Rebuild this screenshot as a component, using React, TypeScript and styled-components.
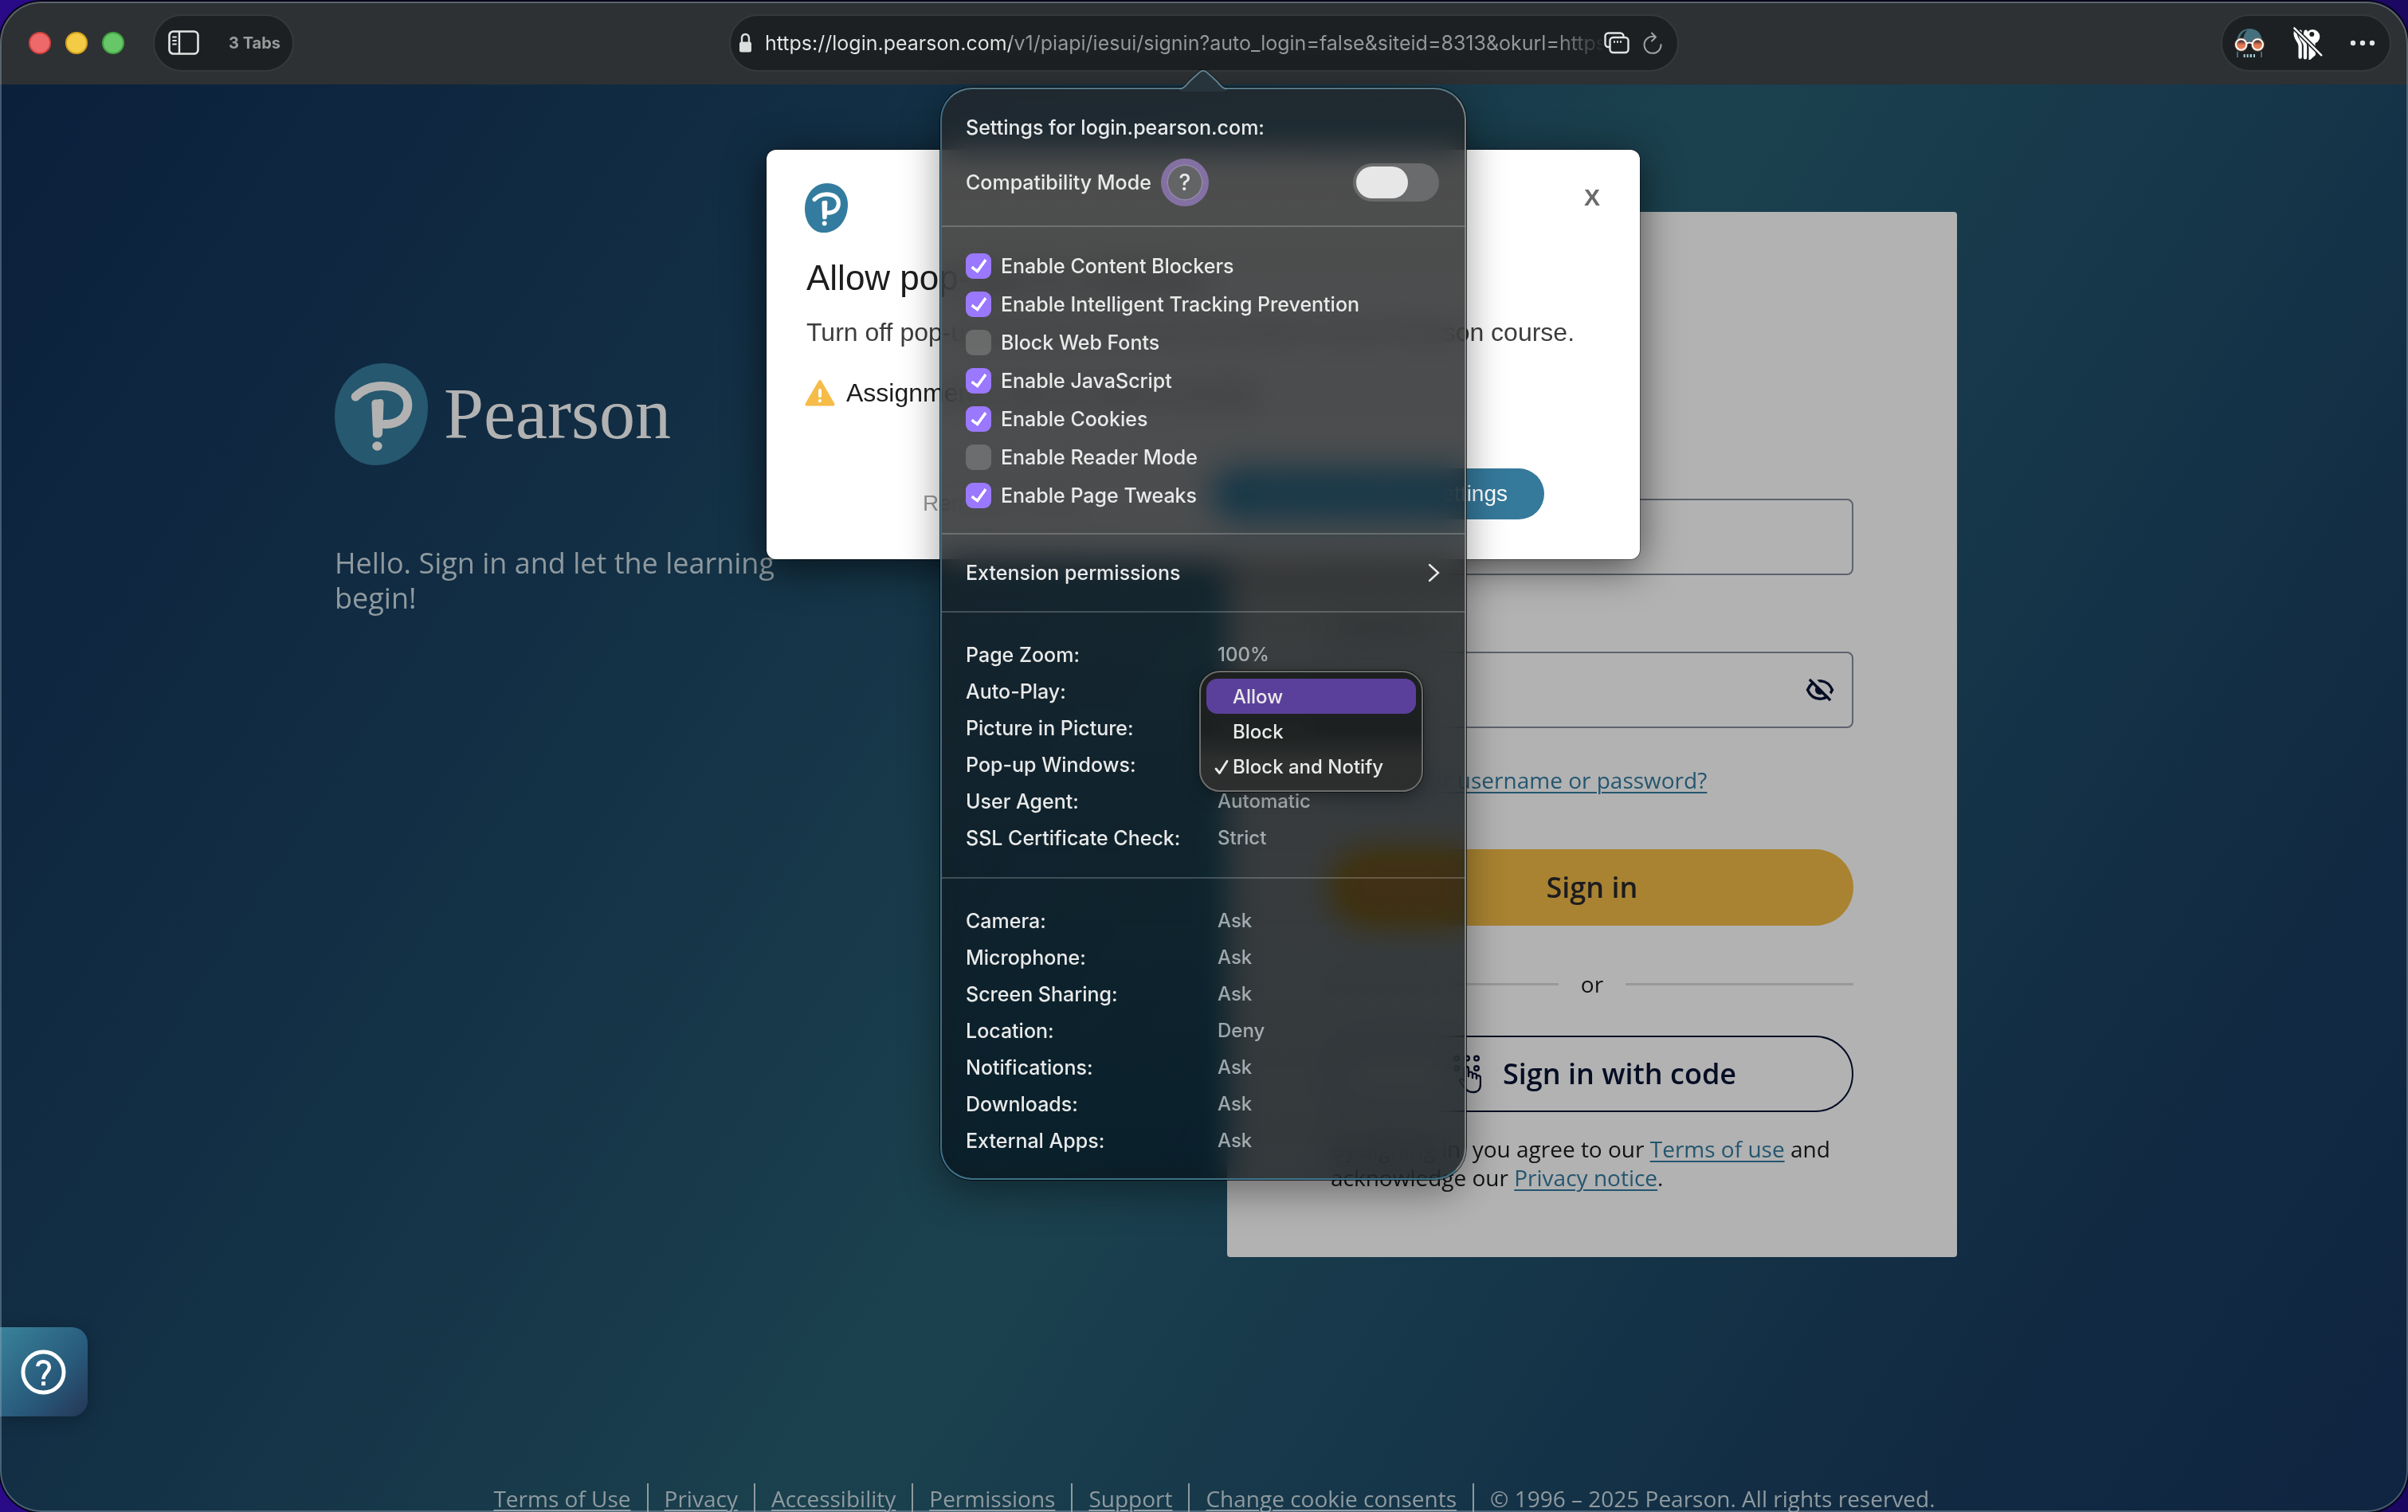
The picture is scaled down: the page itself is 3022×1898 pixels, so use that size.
import React from "react";
import styled, { createGlobalStyle, css } from "styled-components";

const system = `Inter, "Liberation Sans", sans-serif`;
const page = `"Open Sans", "Noto Sans", sans-serif`;
const helvetica = `"Liberation Sans", Arial, sans-serif`;

const GlobalStyle = createGlobalStyle`
  *, *::before, *::after { box-sizing: border-box; }
  body { margin: 0; }
  h1, h2, p, ul { margin: 0; padding: 0; }
  button, input, select { font: inherit; color: inherit; margin: 0; }
  button { padding: 0; border: 0; background: none; cursor: pointer; }
  svg { display: block; flex: none; }
`;

const Desktop = styled.div`
  height: 100vh;
  padding-top: 2px;
  overflow: hidden;
  background: linear-gradient(90deg, #2a0a86 0%, #2233b8 35%, #4c8f7c 50%, #2233b8 62%, #1a0760 100%);
`;

const BrowserWindow = styled.div`
  position: relative;
  display: flex;
  flex-direction: column;
  height: 100%;
  border-radius: 52px;
  overflow: hidden;
  background: #2e3133;
  box-shadow: 0 0 0 2px #08051c;

  &::after {
    content: "";
    position: absolute;
    inset: 0;
    z-index: 20;
    border: 2px solid rgba(150, 170, 185, 0.42);
    border-radius: 52px;
    pointer-events: none;
  }
`;

/* ---------- toolbar ---------- */

const Toolbar = styled.header`
  position: relative;
  z-index: 10;
  flex: none;
  display: grid;
  grid-template-columns: 1fr 1192px 1fr;
  align-items: center;
  height: 104px;
  background: #2e3133;
  font-family: ${system};
`;

const ToolbarSide = styled.div<{ $end?: boolean }>`
  display: flex;
  align-items: center;
  gap: 36px;
  padding: 0 21px 0 36px;
  justify-content: ${(p) => (p.$end ? "flex-end" : "flex-start")};
`;

const Lights = styled.div`
  display: flex;
  gap: 18px;
`;

const Light = styled.button<{ $fill: string; $edge: string }>`
  width: 28px;
  height: 28px;
  border-radius: 50%;
  background: ${(p) => p.$fill};
  border: 2px solid ${(p) => p.$edge};
`;

const pill = css`
  display: flex;
  align-items: center;
  height: 72px;
  border: 2px solid #36393c;
  border-radius: 36px;
  background: #1c2022;
`;

const TabsPill = styled.div`
  ${pill}
  gap: 36px;
  padding: 0 15px 0 17px;
  color: #9a9b9c;
  font-size: 20px;
  font-weight: 700;
`;

const ExtensionsPill = styled.div`
  ${pill}
  gap: 34px;
  padding: 0 18px 0 14px;
`;

const AddressArea = styled.div`
  position: relative;
`;

const AddressBar = styled.div`
  ${pill}
  padding: 0 18px 0 10px;
  gap: 16px;
`;

const AddressInput = styled.input`
  flex: 1;
  min-width: 0;
  height: 40px;
  margin-right: -14px;
  padding: 0;
  border: 0;
  outline: 0;
  font-size: 25px;
  color: transparent;
  background: linear-gradient(90deg, #e6e7e7 308px, #97999a 308px, #97999a calc(100% - 60px), #25292b 100%);
  background-clip: text;
  -webkit-background-clip: text;
`;

/* ---------- page ---------- */

const Page = styled.div`
  position: relative;
  flex: 1;
  min-height: 0;
  overflow: hidden;
  background: linear-gradient(
    123deg,
    #0b203b 0%,
    #122e44 26%,
    #1b414e 52%,
    #16374a 67%,
    #122c43 82%,
    #0f2440 100%
  );
  font-family: ${page};
  font-size: 28px;
  line-height: 36px;
  color: #111214;
`;

const Columns = styled.main`
  display: flex;
  justify-content: space-between;
  padding: 160px 566px 0 420px;
`;

const Brand = styled.section`
  width: 580px;
  padding-top: 190px;
`;

const Logo = styled.div`
  display: flex;
  align-items: center;
  gap: 20px;
  height: 128px;
  font-family: "Liberation Serif", "Times New Roman", serif;
  font-size: 90px;
  line-height: 128px;
  color: #b2b2b2;
`;

const Tagline = styled.p`
  margin-top: 101px;
  font-size: 36px;
  line-height: 44px;
  color: #8f9a9f;
`;

const Card = styled.form`
  flex: none;
  display: flex;
  flex-direction: column;
  width: 916px;
  padding: 120px 130px 82px;
  border-radius: 4px;
  background: #b2b2b2;
`;

const CardTitle = styled.h1`
  margin-bottom: 118px;
  font-size: 48px;
  line-height: 72px;
  font-weight: 600;
`;

const Field = styled.div`
  display: flex;
  flex-direction: column;
  gap: 14px;
  margin-bottom: 46px;
`;

const FieldBox = styled.div`
  display: flex;
  align-items: center;
  height: 96px;
  padding: 0 22px;
  border: 2px solid #5d626d;
  border-radius: 8px;
`;

const FieldInput = styled.input`
  flex: 1;
  min-width: 0;
  height: 100%;
  border: 0;
  outline: 0;
  background: transparent;
`;

const PageLink = styled.a`
  color: #24566f;
  text-decoration: underline;
  text-decoration-thickness: 2px;
  text-underline-offset: 4px;
`;

const ForgotRow = styled.p`
  padding-top: 1px;
  margin-bottom: 69px;
`;

const WideButton = styled.button<{ $outline?: boolean }>`
  display: flex;
  align-items: center;
  justify-content: center;
  gap: 27px;
  height: 96px;
  border-radius: 48px;
  font-size: 36px;
  font-weight: 600;
  ${(p) =>
    p.$outline
      ? css`
          border: 2px solid #050d24;
          color: #050d24;
        `
      : css`
          background: #a98331;
          color: #1c1c1f;
        `}
`;

const Divider = styled.div`
  display: flex;
  align-items: center;
  gap: 28px;
  margin: 55px 0 47px;

  &::before, &::after {
    content: "";
    flex: 1;
    height: 3px;
    background: #999;
  }
`;

const Legal = styled.p`
  margin-top: 28px;
`;

const Footer = styled.footer`
  display: flex;
  justify-content: center;
  margin-top: 284px;
  line-height: 38px;
  color: #8f9a9f;
`;

const FooterItem = styled.span`
  padding: 0 20px;
  & + & { border-left: 2px solid #8f9a9f; }
  &:first-child { padding-left: 26px; }
  &:last-child { padding-right: 0; }
`;

const FooterLink = styled.a`
  color: inherit;
  text-decoration: underline;
  text-decoration-thickness: 2px;
  text-underline-offset: 3px;
`;

const HelpTab = styled.button`
  position: absolute;
  left: 0;
  bottom: 120px;
  display: flex;
  align-items: center;
  width: 110px;
  height: 112px;
  padding-left: 26px;
  border-radius: 0 20px 20px 0;
  background: linear-gradient(135deg, #398299 0%, #285a7b 60%, #263656 100%);
  box-shadow: 0 4px 20px rgba(0, 0, 0, 0.25);
`;

/* ---------- pop-up notice ---------- */

const Notice = styled.section`
  position: absolute;
  top: 82px;
  left: 50%;
  width: 1096px;
  margin-left: -549px;
  padding: 42px 50px 50px 48px;
  border-radius: 12px;
  background: #fff;
  box-shadow: 0 0 0 1px rgba(0, 0, 0, 0.35), 0 10px 50px rgba(0, 0, 0, 0.6);
  font-family: ${helvetica};
  font-size: 32px;
  line-height: 40px;
  color: #1d1d1f;
`;

const NoticeTop = styled.div`
  display: flex;
  justify-content: space-between;
  align-items: flex-start;
`;

const CloseButton = styled.button`
  font-size: 30px;
  font-weight: 700;
  line-height: 36px;
  color: #6b6b6b;
`;

const NoticeTitle = styled.h2`
  margin-top: 31px;
  padding-left: 2px;
  font-size: 44px;
  line-height: 52px;
  font-weight: 400;
`;

const NoticeText = styled.p`
  margin-top: 22px;
  padding-left: 2px;
  color: #3d3d3f;
  white-space: nowrap;
`;

const Warning = styled.p`
  display: flex;
  align-items: center;
  gap: 14px;
  margin-top: 36px;
`;

const NoticeActions = styled.div`
  display: flex;
  justify-content: space-between;
  align-items: flex-end;
  margin-top: 75px;
  padding: 0 70px 0 148px;
  font-size: 28px;
  line-height: 32px;
`;

const LaterButton = styled.button`
  padding-bottom: 4px;
  color: #999;
`;

const SettingsButton = styled.button`
  height: 64px;
  padding: 0 46px;
  border-radius: 32px;
  background: #35799b;
  color: #fff;
`;

/* ---------- site settings popover ---------- */

const Popover = styled.section`
  position: absolute;
  top: 92px;
  left: 50%;
  width: 660px;
  margin-left: -331px;
  border: 2px solid;
  border-color: #557784 #7f8486 #3f7389 #3f6e88;
  border-radius: 40px;
  background: linear-gradient(rgba(38, 38, 38, 0.82), rgba(12, 19, 23, 0.76));
  backdrop-filter: blur(20px) saturate(2.4);
  box-shadow: 0 0 0 1px rgba(0, 0, 0, 0.75), 0 14px 50px rgba(0, 0, 0, 0.4);
  font-size: 25px;
  font-weight: 500;
  line-height: 36px;
  color: #e9eaea;
`;

const Arrow = styled.svg`
  position: absolute;
  z-index: 1;
  top: 69px;
  left: 50%;
  margin-left: -31px;
`;

const Section = styled.div<{ $top: number; $bottom: number }>`
  padding: ${(p) => `${p.$top}px 30px ${p.$bottom}px`};
  & + & { border-top: 2px solid rgba(255, 255, 255, 0.2); }
`;

const PopoverTitle = styled.h2`
  font-size: inherit;
  font-weight: inherit;
`;

const CompatRow = styled.div`
  display: flex;
  align-items: center;
  gap: 12px;
  height: 60px;
  margin-top: 21px;
`;

const HintButton = styled.button`
  width: 60px;
  height: 60px;
  border: 7px solid #8471a3;
  border-radius: 50%;
  background: #636465;
  box-shadow: inset 0 0 0 2px #9284ad;
  font-size: 28px;
`;

const Switch = styled.input`
  appearance: none;
  width: 108px;
  height: 48px;
  margin: 0 2px 0 auto;
  padding: 4px;
  border-radius: 24px;
  background: #6a6b6c;

  &::before {
    content: "";
    display: block;
    width: 65px;
    height: 40px;
    border-radius: 20px;
    background: #e6e7e6;
  }
`;

const CheckRow = styled.label`
  display: flex;
  align-items: center;
  gap: 12px;
  height: 48px;
`;

const CheckBox = styled.input`
  appearance: none;
  flex: none;
  display: grid;
  place-items: center;
  width: 32px;
  height: 32px;
  border-radius: 9px;
  background: rgba(255, 255, 255, 0.18);

  &:checked { background: #9a78ff; }

  &:checked::before {
    content: "";
    width: 11px;
    height: 20px;
    margin-bottom: 4px;
    border: solid #fff;
    border-width: 0 4px 4px 0;
    border-radius: 1px;
    transform: rotate(36deg);
  }
`;

const PermissionsButton = styled.button`
  display: flex;
  align-items: center;
  justify-content: space-between;
  width: 100%;
  height: 96px;
`;

const SettingRow = styled.div`
  display: grid;
  grid-template-columns: 316px 1fr;
  align-items: center;
  height: 46px;
`;

const SettingValue = styled.div`
  position: relative;
  height: 46px;
`;

const ValueSelect = styled.select`
  appearance: none;
  height: 46px;
  padding: 0;
  border: 0;
  background: transparent;
  font-size: 24px;
  color: rgba(225, 232, 236, 0.66);
`;

const Menu = styled.div`
  position: absolute;
  z-index: 2;
  left: -23px;
  top: -95px;
  width: 281px;
  padding: 8px 7px;
  border: 2px solid #6c6e6e;
  border-radius: 26px;
  background: linear-gradient(rgba(30, 33, 33, 0.97) 50%, rgba(46, 47, 47, 0.96) 75%);
  backdrop-filter: blur(8px);
  box-shadow: 0 0 0 1px #101111, 0 6px 20px rgba(0, 0, 0, 0.35);
`;

const MenuItem = styled.button<{ $active?: boolean }>`
  display: grid;
  grid-template-columns: 23px 1fr;
  align-items: center;
  width: 100%;
  height: 44px;
  padding: 2px 0 0 10px;
  border-radius: 14px;
  text-align: left;
  white-space: nowrap;
  font-size: 24px;
  background: ${(p) => (p.$active ? "#5b409b" : "transparent")};
`;

/* ---------- drawings ---------- */

const PearsonMark = ({ width, height, blob, ink }: { width: number; height: number; blob: string; ink: string }) => (
  <svg width={width} height={height} viewBox="0 0 116 128" preserveAspectRatio="none" aria-hidden="true">
    <path fill={blob} d="M60 0C94 0 116 24 116 55C116 96 88 128 51 128C18 128 0 98 0 66C0 27 27 0 60 0Z" />
    <path fill="none" stroke={ink} strokeWidth="11" strokeLinecap="round" d="M26 42C35 33 45 28.500 59 28.500C79 28.500 91.500 38 91 53C90.500 68 79 77 62 76.500" />
    <path fill={ink} d="M46 51C46 47 48 45.500 52 45.500L57 45C60 45 61 47 61 50L59.500 88C59.500 91.500 57 93.500 53 93.500C49.500 93.500 47.500 92 47.500 88Z" />
    <ellipse fill={ink} cx="53" cy="104" rx="6.200" ry="5.800" />
  </svg>
);

const SidebarIcon = () => (
  <svg width="40" height="32" viewBox="0 0 40 32" fill="none" stroke="#e3e4e4" aria-hidden="true">
    <rect x="1.500" y="1.500" width="36" height="28" rx="5" strokeWidth="2.600" />
    <path strokeWidth="2.400" d="M14 2V30" />
    <path strokeWidth="1.800" strokeLinecap="round" d="M6 8.500H10M6 13H10M6 17.500H10" />
  </svg>
);

const LockIcon = () => (
  <svg width="17" height="26" viewBox="0 0 17 26" aria-hidden="true">
    <path fill="none" stroke="#dcdddd" strokeWidth="2.400" d="M4 13V7.500C4 4 5.500 2 8.500 2S13 4 13 7.500V13" />
    <rect x="1" y="11.500" width="15" height="13" rx="2.500" fill="#dcdddd" />
  </svg>
);

const WindowsIcon = () => (
  <svg width="32" height="28" viewBox="0 0 32 28" fill="none" stroke="#e3e4e4" strokeWidth="2.400" aria-hidden="true">
    <path d="M7 19H5.500A4 4 0 0 1 1.500 15V5.500A4 4 0 0 1 5.500 1.500H20.500A4 4 0 0 1 24.500 5.500V6.500" />
    <rect x="7.500" y="7" width="23" height="19" rx="4" fill="#1c2022" />
    <path strokeDasharray="2 2" d="M12 12.500H22" />
  </svg>
);

const ReloadIcon = () => (
  <svg width="26" height="28" viewBox="0 0 26 28" fill="none" stroke="#a1a2a3" strokeWidth="2" strokeLinecap="round" strokeLinejoin="round" aria-hidden="true">
    <path d="M16 6.300A10.500 10.500 0 1 0 23.500 16" />
    <path d="M12 1.500L17 6.500L12 11.500" />
  </svg>
);

const SpyIcon = () => (
  <svg width="40" height="40" viewBox="312 102 120 120" aria-hidden="true">
    <defs>
      <linearGradient id="lens" x1="0" y1="0" x2="0" y2="1">
        <stop offset="0.150" stopColor="#4a3434" />
        <stop offset="0.500" stopColor="#e07650" />
        <stop offset="1" stopColor="#ea8560" />
      </linearGradient>
    </defs>
    <path fill="#44707f" d="M325 156C326 122 350 108 372 108C396 108 418 122 420 156Z" />
    <path fill="#1c2022" d="M333 156C335 132 348 118 364 113C352 126 349 138 349 156Z" />
    <path fill="#1c2022" d="M340 186L352 158H392L404 186Z" />
    <circle cx="341" cy="168" r="26" fill="#d9704c" opacity="0.400" />
    <circle cx="403" cy="168" r="26" fill="#d9704c" opacity="0.400" />
    <circle cx="341" cy="168" r="20" fill="url(#lens)" stroke="#fff" strokeWidth="6" />
    <circle cx="403" cy="168" r="20" fill="url(#lens)" stroke="#fff" strokeWidth="6" />
    <path fill="none" stroke="#fff" strokeWidth="6" d="M360 164Q372 157 384 164" />
    <path fill="#3f6b7c" d="M324 194H330V216H324ZM414 194H420V216H414Z" />
    <path fill="#a9cdd8" d="M350 204H356V216H350ZM362 204H368V216H362ZM374 204H381V216H374ZM387 204H393V216H387Z" />
  </svg>
);

const BirdIcon = () => (
  <svg width="38" height="42" viewBox="527 98 114 126" fill="none" aria-hidden="true">
    <g stroke="#fff" strokeWidth="13" strokeLinecap="round">
      <path d="M539 116C532 146 556 150 556 172V214" />
      <path d="M556 118C550 146 575 150 575 172V216" />
      <path d="M577 118C568 146 595 156 595 178V214L606 204" />
    </g>
    <circle cx="603" cy="137" r="27" fill="#fff" />
    <path fill="#fff" d="M590 160L612 152L614 206L596 220Z" />
    <circle cx="600" cy="128" r="9" fill="#1c2022" />
    <path stroke="#1c2022" strokeWidth="17" d="M528 99L641 212" />
    <path stroke="#fff" strokeWidth="7" strokeLinecap="round" d="M534 105L636 207" />
  </svg>
);

const MoreIcon = () => (
  <svg width="32" height="8" viewBox="0 0 32 8" fill="#e3e4e4" aria-hidden="true">
    <circle cx="4" cy="4" r="3.200" />
    <circle cx="16" cy="4" r="3.200" />
    <circle cx="28" cy="4" r="3.200" />
  </svg>
);

const EyeOffIcon = () => (
  <svg width="36" height="30" viewBox="0 0 38 32" fill="none" aria-hidden="true">
    <path stroke="#050d24" strokeWidth="3.600" d="M2.500 16C6 8 12 4 19 4S32 8 35.500 16C32 24 26 28 19 28S6 24 2.500 16Z" />
    <circle cx="19" cy="16" r="6.500" fill="#050d24" />
    <path stroke="#b2b2b2" strokeWidth="5" d="M9 0L36 27" />
    <path stroke="#050d24" strokeWidth="3.600" d="M5 2L33 30" />
  </svg>
);

const CodeIcon = () => (
  <svg width="42" height="50" viewBox="0 0 42 50" fill="none" stroke="#050d24" strokeWidth="2.400" aria-hidden="true">
    <circle cx="11" cy="5.500" r="2.800" />
    <circle cx="24" cy="5.500" r="2.800" />
    <circle cx="36" cy="5.500" r="2.800" />
    <circle cx="11" cy="18" r="2.800" />
    <circle cx="36" cy="18" r="2.800" />
    <path strokeLinejoin="round" d="M21 34V19C21 15 26 15 26 19V28V24C26 22 31 22 31 25V30V26C31 24 36 24 36 27V31V28C37 26 41 27 41 30V38C41 45 37 48 32 48C26 48 24 46 21 42L15 34C14 31 18 30 21 34" />
  </svg>
);

const WarningIcon = () => (
  <svg width="38" height="34" viewBox="0 0 38 34" aria-hidden="true">
    <path fill="#f5bc48" stroke="#f5bc48" strokeWidth="4" strokeLinejoin="round" d="M19 3L35.500 31.500H2.500Z" />
    <path stroke="#fff" strokeWidth="4" strokeLinecap="round" d="M19 14V21M19 27V27.200" />
  </svg>
);

const QuestionIcon = () => (
  <svg width="57" height="57" viewBox="0 0 58 58" fill="none" stroke="#fff" aria-hidden="true">
    <circle cx="29" cy="29" r="26" strokeWidth="5" />
    <path strokeWidth="4.500" d="M21.500 21.500C22 17 25 15.500 29 15.500C33.500 15.500 36.500 18.500 36.500 22.500C36.500 29 29 30 29 38" />
    <path strokeWidth="5" d="M29 41V46" />
  </svg>
);

const ChevronIcon = () => (
  <svg width="16" height="24" viewBox="0 0 16 24" fill="none" stroke="#e9eaea" strokeWidth="2.400" strokeLinecap="round" aria-hidden="true">
    <path d="M2 2L13 12L2 22" />
  </svg>
);

const TickIcon = () => (
  <svg width="18" height="20" viewBox="0 0 18 20" fill="none" stroke="#e9eaea" strokeWidth="2.800" strokeLinecap="round" strokeLinejoin="round" aria-hidden="true">
    <path d="M2 12L6.500 17.500L16 2.500" />
  </svg>
);

/* ---------- data ---------- */

const toggles: [string, boolean][] = [
  ["Enable Content Blockers", true],
  ["Enable Intelligent Tracking Prevention", true],
  ["Block Web Fonts", false],
  ["Enable JavaScript", true],
  ["Enable Cookies", true],
  ["Enable Reader Mode", false],
  ["Enable Page Tweaks", true],
];

const pageSettings: [string, string][] = [
  ["Page Zoom", "100%"],
  ["Auto-Play", "Automatic"],
  ["Picture in Picture", "Automatic"],
  ["Pop-up Windows", "Block and Notify"],
  ["User Agent", "Automatic"],
  ["SSL Certificate Check", "Strict"],
];

const permissions: [string, string][] = [
  ["Camera", "Ask"],
  ["Microphone", "Ask"],
  ["Screen Sharing", "Ask"],
  ["Location", "Deny"],
  ["Notifications", "Ask"],
  ["Downloads", "Ask"],
  ["External Apps", "Ask"],
];

const popupChoices = ["Allow", "Block", "Block and Notify"];

const footerLinks = ["Terms of Use", "Privacy", "Accessibility", "Permissions", "Support", "Change cookie consents"];

const Setting = ({ name, value }: { name: string; value: string }) => {
  const id = name.toLowerCase().replace(/[^a-z]+/g, "-");
  return (
    <SettingRow>
      <label htmlFor={id}>{name}:</label>
      <SettingValue>
        <ValueSelect id={id} defaultValue={value}>
          <option>{value}</option>
        </ValueSelect>
        {name === "Pop-up Windows" && (
          <Menu role="listbox" aria-label={name}>
            {popupChoices.map((choice, i) => (
              <MenuItem key={choice} type="button" role="option" aria-selected={choice === value} $active={i === 0}>
                <span>{choice === value && <TickIcon />}</span>
                {choice}
              </MenuItem>
            ))}
          </Menu>
        )}
      </SettingValue>
    </SettingRow>
  );
};

const SiteSettings = () => (
  <>
    <Popover aria-label="Site settings">
      <Section $top={30} $bottom={24}>
        <PopoverTitle>Settings for login.pearson.com:</PopoverTitle>
        <CompatRow>
          <label htmlFor="compat">Compatibility Mode</label>
          <HintButton type="button">?</HintButton>
          <Switch id="compat" type="checkbox" role="switch" />
        </CompatRow>
      </Section>
      <Section $top={25} $bottom={23}>
        {toggles.map(([label, on]) => (
          <CheckRow key={label}>
            <CheckBox type="checkbox" defaultChecked={on} />
            {label}
          </CheckRow>
        ))}
      </Section>
      <Section $top={0} $bottom={0}>
        <PermissionsButton type="button">
          Extension permissions
          <ChevronIcon />
        </PermissionsButton>
      </Section>
      <Section $top={30} $bottom={26}>
        {pageSettings.map(([name, value]) => (
          <Setting key={name} name={name} value={value} />
        ))}
      </Section>
      <Section $top={30} $bottom={24}>
        {permissions.map(([name, value]) => (
          <Setting key={name} name={name} value={value} />
        ))}
      </Section>
    </Popover>
    <Arrow width="60" height="28" viewBox="0 0 60 28" aria-hidden="true">
      <path fill="#27343b" d="M2 25C7 24 9 19 13 15L25 4C28 1 32 1 35 4L47 15C51 19 53 24 58 25V28H2Z" />
      <path fill="none" stroke="#0b0f11" strokeWidth="1" d="M0 22.500C6 22 8 18 12 14L24 3C28 -0.500 32 -0.500 36 3L48 14C52 18 54 22 60 22.500" />
      <path fill="none" stroke="#5f7f8d" strokeWidth="2" d="M0 24.500C7 24 9 19 13 15L25 4C28 1 32 1 35 4L47 15C51 19 53 24 60 24.500" />
    </Arrow>
  </>
);

const App = () => (
  <Desktop>
    <GlobalStyle />
    <BrowserWindow>
      <Toolbar>
        <ToolbarSide>
          <Lights>
            <Light aria-label="Close" $fill="#ee6a6a" $edge="#d2403f" />
            <Light aria-label="Minimize" $fill="#f4cb45" $edge="#d3a31d" />
            <Light aria-label="Zoom" $fill="#66c668" $edge="#3fa342" />
          </Lights>
          <TabsPill>
            <button type="button" aria-label="Show sidebar">
              <SidebarIcon />
            </button>
            <span>3 Tabs</span>
          </TabsPill>
        </ToolbarSide>
        <AddressArea>
          <AddressBar>
            <LockIcon />
            <AddressInput
              aria-label="Address"
              defaultValue="https://login.pearson.com/v1/piapi/iesui/signin?auto_login=false&siteid=8313&okurl=https://"
            />
            <WindowsIcon />
            <button type="button" aria-label="Reload">
              <ReloadIcon />
            </button>
          </AddressBar>
          <SiteSettings />
        </AddressArea>
        <ToolbarSide $end>
          <ExtensionsPill>
            <button type="button" aria-label="Privacy extension"><SpyIcon /></button>
            <button type="button" aria-label="Password extension"><BirdIcon /></button>
            <button type="button" aria-label="More"><MoreIcon /></button>
          </ExtensionsPill>
        </ToolbarSide>
      </Toolbar>

      <Page>
        <Columns>
          <Brand>
            <Logo>
              <PearsonMark width={117} height={128} blob="#26586f" ink="#b2b2b2" />
              Pearson
            </Logo>
            <Tagline>Hello. Sign in and let the learning begin!</Tagline>
          </Brand>
          <Card>
            <CardTitle>Sign in</CardTitle>
            <Field>
              <label htmlFor="username">Username</label>
              <FieldBox>
                <FieldInput id="username" type="text" />
              </FieldBox>
            </Field>
            <Field>
              <label htmlFor="password">Password</label>
              <FieldBox>
                <FieldInput id="password" type="password" />
                <button type="button" aria-label="Show password"><EyeOffIcon /></button>
              </FieldBox>
            </Field>
            <ForgotRow>
              <PageLink href="#forgot">Forgot your username or password?</PageLink>
            </ForgotRow>
            <WideButton type="button">Sign in</WideButton>
            <Divider>or</Divider>
            <WideButton type="button" $outline>
              <CodeIcon />
              Sign in with code
            </WideButton>
            <Legal>
              By signing in, you agree to our <PageLink href="#terms">Terms of use</PageLink> and acknowledge our{" "}
              <PageLink href="#privacy">Privacy notice</PageLink>.
            </Legal>
          </Card>
        </Columns>

        <Footer>
          {footerLinks.map((label) => (
            <FooterItem key={label}>
              <FooterLink href="#footer">{label}</FooterLink>
            </FooterItem>
          ))}
          <FooterItem>© 1996 – 2025 Pearson. All rights reserved.</FooterItem>
        </Footer>

        <Notice role="dialog" aria-label="Allow pop-ups">
          <NoticeTop>
            <PearsonMark width={54} height={62} blob="#347c9f" ink="#fff" />
            <CloseButton type="button">X</CloseButton>
          </NoticeTop>
          <NoticeTitle>Allow pop-ups to continue</NoticeTitle>
          <NoticeText>Turn off pop-up blockers for the best results in your Pearson course.</NoticeText>
          <Warning>
            <WarningIcon />
            Assignments may not open correctly
          </Warning>
          <NoticeActions>
            <LaterButton type="button">Remind me later</LaterButton>
            <SettingsButton type="button">Open my browser settings</SettingsButton>
          </NoticeActions>
        </Notice>

        <HelpTab type="button" aria-label="Help">
          <QuestionIcon />
        </HelpTab>
      </Page>
    </BrowserWindow>
  </Desktop>
);

export default App;
